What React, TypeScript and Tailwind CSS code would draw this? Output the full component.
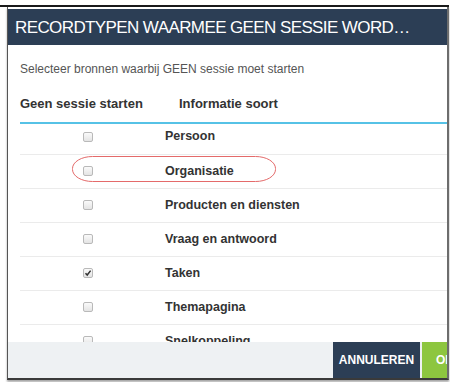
// Recordtypen dialog: choose which record types start no session.

import React from 'react'

interface RowItem {
  label: string
  checked: boolean
}

const rows: RowItem[] = [
  { label: 'Persoon', checked: false },
  { label: 'Organisatie', checked: false },
  { label: 'Producten en diensten', checked: false },
  { label: 'Vraag en antwoord', checked: false },
  { label: 'Taken', checked: true },
  { label: 'Themapagina', checked: false },
  { label: 'Snelkoppeling', checked: false },
]

function Checkbox({ checked }: { checked: boolean }) {
  return (
    <span className="flex h-[10px] w-[10px] items-center justify-center rounded-[2px] border border-[#b9b9b9] bg-gradient-to-b from-[#fafafa] to-[#e4e4e4]">
      {checked && (
        <svg width="8" height="8" viewBox="0 0 8 8">
          <path d="M1.5 4.2 L3.2 6 L6.6 1.6" fill="none" stroke="#333" strokeWidth="1.5" />
        </svg>
      )}
    </span>
  )
}

export default function App() {
  return (
    <div className="relative h-[382px] w-[450px] overflow-hidden bg-white font-['Liberation_Sans',Arial,sans-serif]">
      {/* outer window edge */}
      <div className="mt-[5px] h-[2px] w-[449px] bg-[#1a1a1a]" />

      {/* Dialog */}
      <div className="ml-[7px] flex h-[373px] w-[442px] flex-col border-r-2 border-b-2 border-l border-r-[#6d6d6d] border-b-[#3a3a3a] border-l-[#555] pt-[2px] shadow-[0_2px_2px_rgba(0,0,0,0.35)]">
        {/* Header */}
        <div className="flex h-[36px] shrink-0 items-center bg-[#2c3e55] pl-[7px]">
          <h2 className="text-[17px] leading-none tracking-[-0.6px] whitespace-nowrap text-white">
            RECORDTYPEN WAARMEE GEEN SESSIE WORD…
          </h2>
        </div>

        {/* Body */}
        <div className="flex h-[297px] shrink-0 flex-col overflow-hidden pl-[12px]">
          <p className="shrink-0 pt-[17px] text-[12px] leading-[14px] text-[#555]">
            Selecteer bronnen waarbij GEEN sessie moet starten
          </p>

          {/* Table head */}
          <div className="mt-[10px] flex h-[38px] shrink-0 items-center border-b-2 border-[#56c2e6] text-[13px] font-bold text-[#333]">
            <span className="w-[159px]">Geen sessie starten</span>
            <span>Informatie soort</span>
          </div>

          {/* Rows */}
          {rows.map((row, i) => (
            <div
              key={row.label}
              className={
                i === 0
                  ? 'flex h-[30px] shrink-0 items-center pb-[5px] text-[12.5px] font-bold text-[#333]'
                  : 'flex h-[34px] shrink-0 items-center border-t border-[#ebebeb] pb-[1px] text-[12.5px] font-bold text-[#333]'
              }
            >
              <span className="flex w-[145px] justify-center pr-[9px]">
                <Checkbox checked={row.checked} />
              </span>
              <span>{row.label}</span>
            </div>
          ))}
        </div>

        {/* Footer */}
        <div className="flex h-[36px] shrink-0 justify-end gap-[2px] bg-[#eef1f3]">
          <button
            type="button"
            className="w-[87px] bg-[#2c3e55] text-[12px] font-bold text-white"
          >
            ANNULEREN
          </button>
          <button
            type="button"
            className="w-[25px] overflow-hidden bg-[#8dc63f] pl-[14px] text-left text-[12px] font-bold whitespace-nowrap text-white"
          >
            OK
          </button>
        </div>
      </div>

      {/* Red annotation around Organisatie */}
      <svg className="absolute top-0 left-0" width="450" height="382">
        <rect x="72.5" y="156.5" width="203" height="25" rx="20" ry="12" fill="none" stroke="#e46a6a" strokeWidth="1" />
      </svg>
    </div>
  )
}
